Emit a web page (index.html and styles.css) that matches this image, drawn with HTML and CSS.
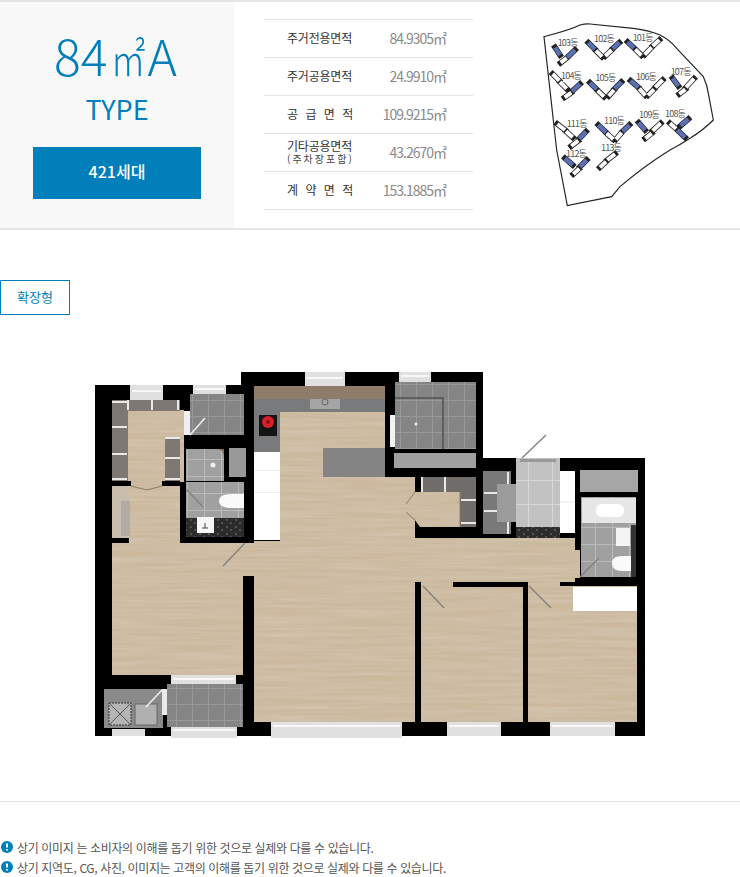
FILE: index.html
```html
<!DOCTYPE html>
<html lang="ko">
<head>
<meta charset="utf-8">
<title>84A TYPE</title>
<link rel="stylesheet" href="styles.css">
</head>
<body>
<header class="summary">
  <div class="type-panel">
    <div class="type-size">84<span class="unit">㎡</span>A</div>
    <div class="type-word">TYPE</div>
    <div class="households">421세대</div>
  </div>
  <div class="areas">
    <div class="area-row"><div class="area-label">주거전용면적</div><div class="area-value">84.9305㎡</div></div>
    <div class="area-row"><div class="area-label">주거공용면적</div><div class="area-value">24.9910㎡</div></div>
    <div class="area-row"><div class="area-label">공 급 면 적</div><div class="area-value">109.9215㎡</div></div>
    <div class="area-row"><div class="area-label two-line">기타공용면적<small>(주차장포함)</small></div><div class="area-value">43.2670㎡</div></div>
    <div class="area-row"><div class="area-label">계 약 면 적</div><div class="area-value">153.1885㎡</div></div>
  </div>
  <svg class="site-map" viewBox="0 0 600 630" width="200" height="210" aria-label="배치도">
    <path class="site-edge" d="M42 80 C80 70 120 60 150 45 Q165 41 180 42 L310 55 Q360 62 390 75 Q420 90 440 115 L520 200 Q532 225 535 250 L550 330 Q520 360 480 385 Q450 405 420 420 Q340 470 270 530 L245 560 L112 587 L80 420 Z"/>
    <path class="bld-o" d="M75 112L90 135M135 120L112 142M110 144L92 158M175 98L195 118M198 122L216 140M226 138L245 120M248 116L268 98M293 96L312 114M316 118L334 136M344 134L365 112M368 108L388 90M180 218L200 238M203 242L222 260M236 258L252 240M254 236L274 216M302 212L325 232M328 236L346 256M354 256L372 238M376 232L398 210M68 192L88 212M90 216L110 236M104 262L124 248M126 244L150 222M428 205L445 228M448 252L466 238M468 232L492 206M82 342L105 360M108 364L128 382M124 408L145 392M148 386L168 365M205 345L228 367M230 370L250 388M258 388L275 368M278 364L298 345M326 338L345 360M346 385L365 370M368 362L392 340M420 340L438 356M442 360L465 382M452 347L475 327M105 445L128 465M130 492L148 476M150 470L170 450M210 472L228 455M232 450L255 432"/>
    <path class="bld-w" d="M110 144L92 158M198 122L216 140M226 138L245 120M316 118L334 136M344 134L365 112M368 108L388 90M203 242L222 260M236 258L252 240M328 236L346 256M354 256L372 238M376 232L398 210M68 192L88 212M90 216L110 236M104 262L124 248M448 252L466 238M468 232L492 206M82 342L105 360M108 364L128 382M124 408L145 392M230 370L250 388M258 388L275 368M346 385L365 370M368 362L392 340M420 340L438 356M130 492L148 476M210 472L228 455M232 450L255 432"/>
    <path class="bld-b" d="M75 112L90 135M135 120L112 142M175 98L195 118M248 116L268 98M293 96L312 114M180 218L200 238M254 236L274 216M302 212L325 232M126 244L150 222M428 205L445 228M148 386L168 365M205 345L228 367M278 364L298 345M326 338L345 360M442 360L465 382M452 347L475 327M105 445L128 465M150 470L170 450"/>
    <g class="site-label">
      <text x="83" y="107">103동</text><text x="192" y="95">102동</text><text x="308" y="92">101동</text>
      <text x="93" y="207">104동</text><text x="196" y="213">105동</text><text x="318" y="210">106동</text><text x="422" y="195">107동</text>
      <text x="110" y="352">111동</text><text x="222" y="342">110동</text><text x="327" y="325">109동</text><text x="405" y="321">108동</text>
      <text x="108" y="440">112동</text><text x="213" y="422">113동</text>
    </g>
  </svg>
</header>

<div class="tag-row"><span class="tag">확장형</span></div>

<svg class="plan" viewBox="90 365 560 380" width="560" height="380" aria-label="평면도">
  <defs>
    <filter id="woodgrain" x="0" y="0" width="100%" height="100%">
      <feTurbulence type="fractalNoise" baseFrequency="0.012 0.3" numOctaves="3" seed="7"/>
      <feColorMatrix type="matrix" values="0 0 0 0 0.68  0 0 0 0 0.59  0 0 0 0 0.47  1.1 0 0 0 -0.3"/>
      <feComposite in2="SourceGraphic" operator="in"/>
      <feMerge><feMergeNode in="SourceGraphic"/><feMergeNode/></feMerge>
    </filter>
    <pattern id="tile" width="16" height="16" patternUnits="userSpaceOnUse">
      <rect width="16" height="16" fill="#858585"/>
      <path d="M0 .5H16M.5 0V16" stroke="#989898"/>
    </pattern>
    <pattern id="tile-light" width="17" height="17" patternUnits="userSpaceOnUse">
      <rect width="17" height="17" fill="#a0a0a0"/>
      <path d="M0 .5H17M.5 0V17" stroke="#bababa"/>
    </pattern>
    <pattern id="tile-pale" width="24" height="24" patternUnits="userSpaceOnUse">
      <rect width="24" height="24" fill="#c2c2c2"/>
      <path d="M0 .5H24M.5 0V24" stroke="#d8d8d8"/>
    </pattern>
    <pattern id="stone" width="9" height="7" patternUnits="userSpaceOnUse">
      <rect width="9" height="7" fill="#2c2c2c"/>
      <path d="M1 2h2M5 5h2" stroke="#777"/>
    </pattern>
  </defs>

  <path d="M95 385H241V372H483V458H645V736H95Z" fill="#000"/>

  <!-- wood floors -->
  <g class="wood" filter="url(#woodgrain)">
    <path d="M280 412H385V477H415V538H575V550H580V578H575V582H560V587H527V582H453V587H421V582H415V722H254V576H243V675H112V543H129V538H130V481H180V543H254V541H280Z"/>
    <rect x="421" y="586" width="102" height="136"/>
    <rect x="528" y="586" width="109" height="136"/>
    <rect x="128" y="410" width="56" height="72"/>
    <path d="M406 504L415 492H460V527H420L415 520L406 512Z"/>
  </g>

  <!-- left dressing room -->
  <rect x="112" y="400" width="16" height="81" fill="#7d7873"/>
  <rect x="112" y="400" width="68" height="11" fill="#7d7873"/>
  <rect x="165" y="437" width="15" height="44" fill="#7d7873"/>
  <rect x="112" y="481" width="19" height="5" fill="#000"/>
  <rect x="162" y="481" width="18" height="5" fill="#000"/>
  <path class="shelf" d="M112 402H127M112 427H127M112 454H127M112 479H127M128 400V410M152 400V410M178 400V410M165 438H180M165 458H180M165 479H180"/>
  <path class="seam" d="M131 486L147 490L162 486"/>
  <rect x="112" y="486" width="18" height="52" fill="#c9bdad"/>
  <rect x="121" y="501" width="9" height="35" fill="#b0aca5"/>

  <!-- top balcony -->
  <rect x="190" y="394" width="54" height="41" fill="url(#tile)"/>
  <rect x="184" y="411" width="6" height="24" fill="#f0f0f0"/>
  <path class="door-light" d="M190 435L205 418"/>

  <!-- left bath -->
  <rect x="186" y="449" width="38" height="32" fill="url(#tile-light)"/>
  <rect x="229" y="448" width="17" height="29" fill="#999"/>
  <path d="M216 449Q224 449 224 458V449Z" fill="#8b6e55"/>
  <circle cx="213" cy="465" r="2.5" fill="#eee"/>
  <rect x="186" y="482" width="58" height="37" fill="url(#tile-light)"/>
  <rect x="186" y="518" width="58" height="19" fill="url(#stone)"/>
  <rect x="197" y="517" width="17" height="16" fill="#f6f6f6"/>
  <path d="M202 528h6M205 523v5" stroke="#444"/>
  <path d="M244 494H232Q219 494 219 501Q219 508 232 508H244Z" fill="#fbfbfb"/>
  <path class="door" d="M186 489L203 507"/>

  <!-- kitchen -->
  <rect x="254" y="386" width="131" height="13" fill="#8f7c6b"/>
  <rect x="254" y="399" width="131" height="13" fill="#797a7c"/>
  <rect x="254" y="412" width="26" height="40" fill="#797a7c"/>
  <rect x="310" y="399" width="30" height="10" fill="#a5a5a5"/>
  <circle cx="325" cy="402" r="3" fill="none" stroke="#666"/>
  <rect x="259" y="415" width="18" height="21" fill="#141414"/>
  <circle cx="268" cy="422" r="6" fill="#d8202a"/>
  <circle cx="268" cy="422" r="2" fill="#8a1016"/>
  <rect x="254" y="452" width="26" height="88" fill="#fff"/>
  <path d="M254 470.5H280M254 492.5H280" stroke="#ececec"/>
  <rect x="323" y="448" width="62" height="29" fill="#848484"/>

  <!-- utility room -->
  <rect x="395" y="382" width="81" height="67" fill="url(#tile)"/>
  <path d="M395 398H443V449" fill="none" stroke="#5f5f5f" stroke-width="2"/>
  <rect x="390" y="415" width="5" height="32" fill="#f3f3f3"/>
  <circle cx="416" cy="424" r="1.5" fill="#eee"/>
  <rect x="394" y="453" width="82" height="15" fill="#a0a0a0"/>

  <!-- middle closet -->
  <rect x="421" y="477" width="55" height="15" fill="#6f6c6a"/>
  <rect x="460" y="492" width="16" height="35" fill="#6f6c6a"/>
  <path class="shelf" d="M422 477V492M445 477V492M461 500H476M461 523H476"/>
  <path class="seam" d="M406 504L415 492M406 512L415 520M460 492V527"/>

  <!-- entrance closet -->
  <rect x="483" y="471" width="28" height="63" fill="#797979"/>
  <rect x="497" y="484" width="19" height="38" fill="#9b9b9b"/>
  <path class="shelf" d="M484 493H497M484 511H497M508 472V484M508 522V534"/>

  <!-- entrance -->
  <rect x="516" y="458" width="44" height="69" fill="url(#tile-pale)"/>
  <rect x="520" y="459" width="36" height="3" fill="#999"/>
  <rect x="516" y="527" width="44" height="11" fill="url(#stone)"/>
  <rect x="560" y="471" width="15" height="62" fill="#fff"/>
  <path d="M560 502H575" stroke="#e8e8e8"/>
  <path class="door" d="M522 458L546 435"/>

  <!-- right utility + bath -->
  <rect x="580" y="470" width="58" height="22" fill="#a6a6a6"/>
  <rect x="581" y="497" width="55" height="80" fill="url(#tile-light)"/>
  <rect x="582" y="498" width="54" height="25" fill="#e6e6e6"/>
  <rect x="596" y="504" width="28" height="13" rx="6" fill="#fff"/>
  <rect x="631" y="525" width="5" height="52" fill="#333"/>
  <rect x="616" y="528" width="14" height="18" fill="#f4f4f4"/>
  <path d="M631 556H622Q612 556 612 563Q612 571 622 571H631Z" fill="#fafafa"/>
  <path class="door" d="M580 577L599 558"/>

  <!-- right closet -->
  <rect x="573" y="587" width="64" height="24" fill="#fff"/>

  <!-- interior walls -->
  <path d="M415 582H421V722H415ZM453 582H528V722H523V587H453Z" fill="#000"/>
  <path class="door" d="M423 586L444 608M529 586L551 608"/>
  <path class="door" d="M223 566L245 543"/>

  <!-- lower left balcony -->
  <rect x="167" y="684" width="76" height="43" fill="url(#tile)"/>
  <rect x="104" y="689" width="59" height="39" fill="#8a8a8a"/>
  <rect x="109" y="703" width="22" height="22" fill="#b5b5b5" stroke="#333" stroke-dasharray="2 1"/>
  <path d="M109 703L131 725M131 703L109 725" stroke="#555"/>
  <rect x="135" y="704" width="22" height="21" fill="#b0b0b0" stroke="#666"/>
  <rect x="162" y="689" width="5" height="26" fill="#e9e9e9"/>
  <path class="door-light" d="M146 707L162 690"/>

  <!-- windows -->
  <g class="windows">
    <rect x="130" y="385" width="33" height="15"/>
    <rect x="193" y="385" width="33" height="9"/>
    <rect x="305" y="372" width="40" height="14"/>
    <rect x="399" y="372" width="32" height="10"/>
    <rect x="171" y="675" width="65" height="9"/>
    <rect x="171" y="727" width="66" height="11"/>
    <rect x="112" y="729" width="33" height="7"/>
    <rect x="271" y="722" width="131" height="16"/>
    <rect x="447" y="722" width="54" height="14"/>
    <rect x="550" y="722" width="65" height="14"/>
  </g>
  <path class="sash" d="M132 391H161M195 389H224M307 378H343M401 376H429M173 679H234M173 730H235M273 726H400M449 726H499M552 726H613"/>
</svg>

<footer class="notes">
  <p class="note"><svg class="note-icon" viewBox="0 0 12 12" width="12" height="12"><circle cx="6" cy="6" r="6"/><path d="M6 2.5V6.5M6 8V9.5"/></svg>상기 이미지 는 소비자의 이해를 돕기 위한 것으로 실제와 다를 수 있습니다.</p>
  <p class="note"><svg class="note-icon" viewBox="0 0 12 12" width="12" height="12"><circle cx="6" cy="6" r="6"/><path d="M6 2.5V6.5M6 8V9.5"/></svg>상기 지역도, CG, 사진, 이미지는 고객의 이해를 돕기 위한 것으로 실제와 다를 수 있습니다.</p>
</footer>
</body>
</html>
```
FILE: styles.css
```css
* { box-sizing: border-box; }
html, body { margin: 0; padding: 0; background: #fff; }
body {
  width: 740px;
  height: 877px;
  overflow: hidden;
  font-family: "Noto Sans CJK KR", "Noto Sans", sans-serif;
  color: #333;
}

/* summary band */
.summary {
  display: flex;
  height: 230px;
  border-top: 2px solid #e5e5e5;
  border-bottom: 2px solid #e5e5e5;
}
.type-panel {
  width: 234px;
  background: #f8f8f8;
  display: flex;
  flex-direction: column;
  align-items: center;
  color: #007fba;
}
.type-size {
  flex: none;
  font-size: 50px;
  line-height: 60px;
  margin-top: 22px;
  padding-right: 3px;
  font-weight: 300;
  white-space: nowrap;
}
.unit {
  display: inline-block;
  font-size: 44px;
  line-height: 44px;
  margin: 0 -2px;
  transform: scaleX(.8);
}
.type-word {
  flex: none;
  font-size: 27px;
  line-height: 36px;
  margin-top: 7px;
}
.households {
  flex: none;
  width: 168px;
  height: 52px;
  margin-top: 20px;
  background: #007fba;
  color: #fff;
  font-size: 16px;
  font-weight: 500;
  line-height: 48px;
  text-align: center;
}

/* area table */
.areas {
  width: 209px;
  margin: 17px 0 0 30px;
  border-bottom: 1px solid #e2e2e2;
  height: 191px;
}
.area-row {
  display: flex;
  align-items: center;
  height: 38px;
  border-top: 1px solid #e2e2e2;
  padding-left: 23px;
}
.area-label {
  flex: none;
  width: 66px;
  font-size: 12px;
  line-height: 14px;
  letter-spacing: -0.2px;
  color: #333;
  text-align: justify;
  text-align-last: justify;
  margin-top: -2px;
}
.area-label.two-line small {
  display: block;
  font-size: 10px;
  line-height: 12px;
  letter-spacing: 2px;
  white-space: nowrap;
  text-align: left;
  text-align-last: left;
  color: #444;
}
.area-value {
  width: 93px;
  font-size: 14px;
  letter-spacing: -1px;
  color: #8a8a8a;
  text-align: right;
  margin-top: -1px;
}

/* site map */
.site-map { margin: 8px 0 0 57px; flex: none; }
.site-edge { fill: #fff; stroke: #222; stroke-width: 3.5; }
.bld-o, .bld-w, .bld-b { fill: none; }
.bld-o { stroke: #222; stroke-width: 17; stroke-linecap: square; }
.bld-w { stroke: #fff; stroke-width: 12; }
.bld-b { stroke: #5a6fb4; stroke-width: 13; }
.site-label { font-size: 27px; letter-spacing: -2.4px; fill: #555; }

/* tag */
.tag-row { padding-top: 50px; height: 85px; }
.tag {
  display: block;
  width: 70px;
  height: 35px;
  border: 1px solid #007fba;
  color: #007fba;
  font-size: 13px;
  line-height: 31px;
  text-align: center;
}

/* floor plan */
.plan { display: block; margin: 50px 0 0 90px; filter: blur(.35px); }
.wood { fill: #cbb89d; }
.shelf { fill: none; stroke: #e9e9e9; stroke-width: 2; }
.seam { fill: none; stroke: #8c7a67; }
.door { fill: none; stroke: #85807a; stroke-width: 1.4; }
.door-light { fill: none; stroke: #eee; stroke-width: 1.6; }
.windows { fill: #e0e0e0; }
.sash { fill: none; stroke: #f8f8f8; stroke-width: 2; }

/* notes */
.notes {
  margin-top: 56px;
  border-top: 1px solid #e2e2e2;
  padding-top: 35px;
}
.note {
  display: flex;
  align-items: center;
  gap: 4px;
  margin: 0;
  height: 20px;
  padding-left: 1px;
  font-size: 12px;
  letter-spacing: -0.36px;
  color: #555;
  white-space: nowrap;
}
.note-icon { flex: none; }
.note-icon circle { fill: #007fba; }
.note-icon path { stroke: #fff; stroke-width: 2; fill: none; }
```
